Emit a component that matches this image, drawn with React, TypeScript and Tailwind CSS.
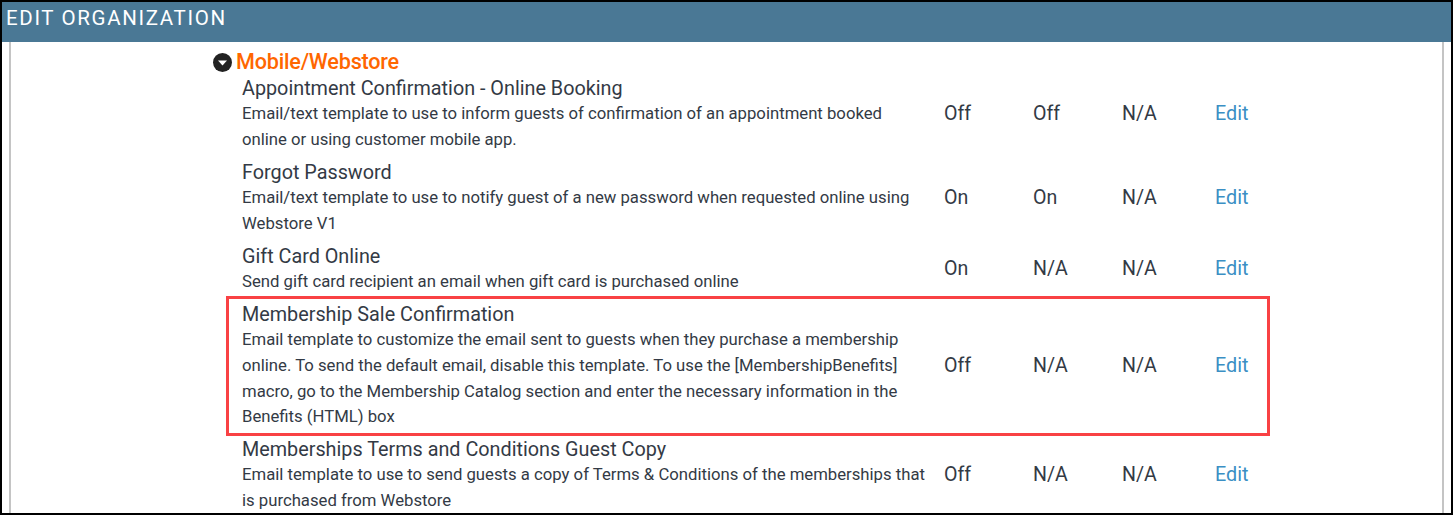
const rows = [
  {
    title: "Appointment Confirmation - Online Booking",
    lines: ["Email/text template to use to inform guests of confirmation of an appointment booked", "online or using customer mobile app."],
    cols: ["Off", "Off", "N/A"],
    h: "h-[84px]",
  },
  {
    title: "Forgot Password",
    lines: ["Email/text template to use to notify guest of a new password when requested online using", "Webstore V1"],
    cols: ["On", "On", "N/A"],
    h: "h-[84px]",
  },
  {
    title: "Gift Card Online",
    lines: ["Send gift card recipient an email when gift card is purchased online"],
    cols: ["On", "N/A", "N/A"],
    h: "h-[58px]",
  },
  {
    title: "Membership Sale Confirmation",
    lines: [
      "Email template to customize the email sent to guests when they purchase a membership",
      "online. To send the default email, disable this template. To use the [MembershipBenefits]",
      "macro, go to the Membership Catalog section and enter the necessary information in the",
      "Benefits (HTML) box",
    ],
    cols: ["Off", "N/A", "N/A"],
    h: "h-[135px]",
    marked: true,
  },
  {
    title: "Memberships Terms and Conditions Guest Copy",
    lines: ["Email template to use to send guests a copy of Terms & Conditions of the memberships that", "is purchased from Webstore"],
    cols: ["Off", "N/A", "N/A"],
    h: "h-[84px]",
  },
];

export default function App() {
  return (
    <div className="h-[515px] w-[1453px] overflow-hidden border-2 border-black bg-white font-['Roboto',sans-serif]">
      <div className="flex h-[40px] items-center bg-[#4a7895] pl-[4px] pb-[8px] text-[20.5px] tracking-[1.65px] text-white">
        EDIT ORGANIZATION
      </div>
      <div className="mx-[7px] h-[471px] overflow-hidden border-x-2 border-[#c4c4c4] pl-[203px] pt-[10px]">
        <div className="-mb-[1px] flex h-[21px] items-center gap-[4px]">
          <svg width="19" height="19" viewBox="0 0 19 19" className="-ml-[1px] shrink-0">
            <circle cx="9.5" cy="9.5" r="9.5" fill="#222222" />
            <path d="M5 7.5h9l-4.5 5z" fill="#ffffff" />
          </svg>
          <span className="text-[21.6px] font-medium tracking-[-0.2px] text-[#ff6600]">Mobile/Webstore</span>
        </div>
        {rows.map((row) => (
          <div key={row.title} className={`relative flex items-center ${row.h}`}>
            <div className="w-[730px] shrink-0 pl-[28px] text-[#333a45]">
              <div className="pt-[1px] text-[19.8px] leading-[25px]">{row.title}</div>
              {row.lines.map((line) => (
                <div key={line} className="whitespace-nowrap text-[16.72px] leading-[25.7px]">
                  {line}
                </div>
              ))}
            </div>
            {row.cols.map((value, i) => (
              <div key={i} className="w-[89px] shrink-0 text-[19.6px] text-[#333a45]">
                {value}
              </div>
            ))}
            <a className="ml-[4px] text-[19.8px] text-[#3b8fc4]">Edit</a>
            {row.marked && (
              <div className="absolute -top-[2px] -bottom-[3px] left-[12px] right-[172px] border-[3px] border-[#f94144]" />
            )}
          </div>
        ))}
      </div>
    </div>
  );
}
